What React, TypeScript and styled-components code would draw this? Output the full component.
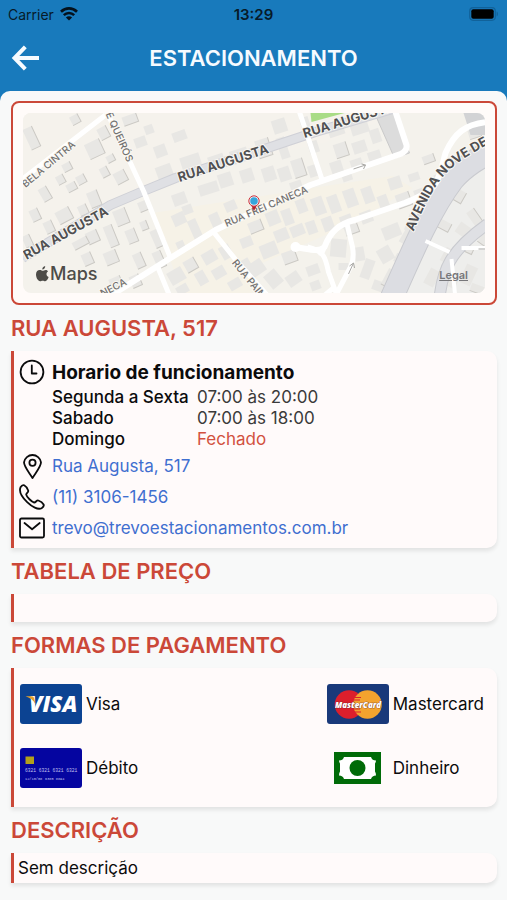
import React from "react";
import styled, { createGlobalStyle } from "styled-components";

const RED = "#cb4838";

const GlobalStyle = createGlobalStyle`
  *, *::before, *::after { box-sizing: border-box; }
  body {
    margin: 0;
    background: #f8f9f9;
    color: #0b0b0c;
    font-family: Inter, "Liberation Sans", sans-serif;
    font-size: 17px;
  }
`;

const Page = styled.div`
  display: flex;
  flex-direction: column;
  min-height: 100vh;
  background: #187abc;
`;

const StatusBar = styled.div`
  display: grid;
  grid-template-columns: 1fr auto 1fr;
  align-items: center;
  height: 28px;
  padding: 0 8px;
  font-size: 14px;
  color: #071a29;
`;

const Carrier = styled.div`
  display: flex;
  align-items: center;
  gap: 6px;
`;

const Clock = styled.time`
  font-size: 15px;
  font-weight: 600;
`;

const Battery = styled.div`
  display: flex;
  justify-content: flex-end;
`;

const NavBar = styled.header`
  display: grid;
  grid-template-columns: 40px 1fr 40px;
  align-items: center;
  height: 63px;
  padding: 0 10px 4px;
  color: #f6fbff;
`;

const BackButton = styled.button`
  display: flex;
  width: 40px;
  padding: 0;
  border: 0;
  background: none;
  color: inherit;
  cursor: pointer;
`;

const NavTitle = styled.h1`
  margin: 0;
  font-size: 22px;
  font-weight: 600;
  line-height: 28px;
  text-align: center;
`;

const Sheet = styled.main`
  flex: 1;
  padding: 10px 10px 16px 11px;
  border-radius: 10px 10px 0 0;
  background: #f8f9f9;
`;

const MapFrame = styled.div`
  position: relative;
  height: 204px;
  padding: 10px;
  border: 2px solid ${RED};
  border-radius: 8px;
  background: #fffbf9;
`;

const MapDrawing = styled.svg`
  display: block;
  width: 100%;
  height: 100%;
  border-radius: 8px;
`;

const MapBrand = styled.div`
  position: absolute;
  left: 23px;
  bottom: 17px;
  display: flex;
  align-items: center;
  gap: 1px;
  font-size: 18px;
  font-weight: 500;
  line-height: 24px;
  color: #4d4c48;
`;

const LegalLink = styled.a`
  position: absolute;
  right: 27px;
  bottom: 20px;
  font-size: 11px;
  font-weight: 600;
  line-height: 16px;
  color: #77777a;
`;

const SectionTitle = styled.h2`
  margin: 0;
  font-size: 22px;
  font-weight: 600;
  line-height: 46px;
  color: ${RED};
`;

const Card = styled.section<{ $padding?: string }>`
  min-height: 28px;
  padding: ${(p) => p.$padding ?? "0"};
  border-left: 3px solid ${RED};
  border-radius: 0 10px 10px 0;
  background: #fffafa;
  box-shadow: 0 3px 4px rgba(0, 0, 0, 0.09);
`;

const InfoRow = styled.div<{ $height: number }>`
  display: grid;
  grid-template-columns: 26px 1fr;
  column-gap: 7px;
  align-items: center;
  height: ${(p) => p.$height}px;
`;

const InfoTitle = styled.h3`
  margin: 0;
  font-size: 19px;
  font-weight: 700;
`;

const Hours = styled.table`
  margin-left: 33px;
  border-collapse: collapse;
  line-height: 21px;
`;

const Day = styled.th`
  width: 145px;
  padding: 0;
  font-weight: 500;
  text-align: left;
  white-space: nowrap;
`;

const Time = styled.td<{ $closed?: boolean }>`
  padding: 0;
  color: ${(p) => (p.$closed ? "#d2513f" : "#3b3a3a")};
  white-space: nowrap;
`;

const ContactLink = styled.a`
  color: #3f6fd0;
  text-decoration: none;
`;

const Payments = styled.ul`
  display: grid;
  grid-template-columns: auto auto;
  grid-auto-rows: 64px;
  justify-content: space-between;
  margin: 0;
  padding: 0;
  list-style: none;
`;

const Payment = styled.li`
  display: grid;
  grid-template-columns: 62px auto;
  column-gap: 4px;
  align-items: center;
  justify-items: center;
  justify-content: start;
`;

const PaymentLabel = styled.span`
  justify-self: start;
`;

const Description = styled.p`
  margin: 0;
  line-height: 30px;
`;

/* ---------- icons ---------- */

const WifiIcon = () => (
  <svg width="18" height="14" viewBox="0 0 18 14" fill="none" stroke="#04111c" aria-hidden="true">
    <path d="M1 4.700C5.600.3 12.400.3 17 4.700" strokeWidth="2.700" />
    <path d="M3.800 8.200c3-2.900 7.400-2.900 10.400 0" strokeWidth="2.500" />
    <path d="M9 13.600 5.900 10.500c1.800-1.700 4.400-1.700 6.200 0z" fill="#04111c" stroke="none" />
  </svg>
);

const BatteryIcon = () => (
  <svg width="30" height="14" viewBox="0 0 30 14" aria-hidden="true">
    <rect x=".7" y=".7" width="25.600" height="12.600" rx="3.500" fill="none" stroke="#11629a" strokeWidth="1.200" />
    <rect x="2.300" y="2.200" width="22.400" height="9.600" rx="2" fill="#000" />
    <path d="M27.600 4.600c1.800.5 1.800 4.300 0 4.800z" fill="#11629a" />
  </svg>
);

const BackIcon = () => (
  <svg width="30" height="26" viewBox="0 0 30 26" fill="none" stroke="currentColor" strokeWidth="4" aria-hidden="true">
    <path d="M15.300 1.800 4.500 13l10.800 11.200M4 13h25" />
  </svg>
);

const lineIcon = {
  fill: "none",
  stroke: "#0b0b0c",
  strokeWidth: 1.8,
  strokeLinecap: "round" as const,
  strokeLinejoin: "round" as const,
  "aria-hidden": true,
};

const ClockIcon = () => (
  <svg width="26" height="26" viewBox="0 0 26 26" {...lineIcon}>
    <circle cx="13" cy="13" r="11.400" />
    <path d="M12.800 6.500v8h4.700" />
  </svg>
);

const PinIcon = () => (
  <svg width="26" height="26" viewBox="0 0 26 26" {...lineIcon}>
    <path d="M13.500 25C11 20.500 5 14 5 9.300a8.600 8.600 0 0 1 17 0C22 14 16 20.500 13.500 25z" />
    <circle cx="13.500" cy="9.700" r="3.100" />
  </svg>
);

const PhoneIcon = () => (
  <svg width="26" height="26" viewBox="0 0 26 26" {...lineIcon}>
    <path d="M1.500 3.300C2.400 1.800 4 .7 5.200 1.300c1.500.8 3.400 3.700 4 5.200.6 1.800-2.300 2.600-2 4.200.4 2.100 5.700 7.400 7.900 7.800 1.600.3 2.400-2.500 4.200-2 1.500.5 4.500 2.500 5.300 4 .6 1.300-.6 2.800-2 3.700C15.500 28-1.800 11.300 1.500 3.300z" />
  </svg>
);

const MailIcon = () => (
  <svg width="26" height="26" viewBox="0 0 26 26" {...lineIcon}>
    <rect x="1" y="3.500" width="24" height="19" rx="1.500" />
    <path d="m5.500 8 7.600 6.200L20.700 8" />
  </svg>
);

const AppleIcon = () => (
  <svg width="13" height="16" viewBox="0 0 14 17" fill="#4d4c48" aria-hidden="true">
    <path d="M9.900 0c.2 1.900-1.300 3.700-3.100 3.700C6.500 2 8.100.2 9.900 0z" />
    <path d="M12.900 5.800c-2.400 1.500-2 4.900.7 5.900-.7 2-2 4.600-3.700 4.600-1 0-1.500-.6-2.700-.6s-1.700.6-2.700.6C2 16.300 0 12.200 0 9.100 0 5.900 2 4.300 4 4.300c1.300 0 2.200.8 3.100.8.900 0 2-.9 3.500-.9.900 0 1.900.6 2.300 1.600z" />
  </svg>
);

const VisaIcon = () => (
  <svg width="62" height="40" viewBox="0 0 62 40" aria-hidden="true">
    <rect width="62" height="40" rx="3" fill="#0c4392" />
    <text x="9" y="28" fontFamily="Open Sans, sans-serif" fontSize="22" fontWeight="800" fontStyle="italic" fill="#fff">VISA</text>
    <path d="M5.500 12.300h6.200c1.500 0 2 .7 2.400 2l1.500 6.200c-1.700-4-5-6.600-10.100-8.200z" fill="#e7a32d" />
  </svg>
);

const MastercardIcon = () => (
  <svg width="62" height="40" viewBox="0 0 62 40" aria-hidden="true">
    <rect width="62" height="40" rx="3" fill="#19397a" />
    <circle cx="22" cy="20.500" r="14.300" fill="#dc1f2c" />
    <circle cx="40.500" cy="20.500" r="14.300" fill="#f3a32e" />
    <path d="M28 13.500h6M27 16h6M27 25h6M28 28h6" stroke="#dc1f2c" strokeWidth="1.200" />
    <text x="31" y="24" textAnchor="middle" fontFamily="Open Sans, sans-serif" fontSize="8" fontWeight="800" fontStyle="italic" fill="#fff" stroke="#5a2531" strokeWidth=".6" paintOrder="stroke">MasterCard</text>
  </svg>
);

const DebitIcon = () => (
  <svg width="62" height="40" viewBox="0 0 62 40" fill="#c3c3f0" fontFamily="Liberation Mono, monospace" aria-hidden="true">
    <rect width="62" height="40" rx="3" fill="#0505a0" />
    <rect x="5.500" y="8.500" width="8.500" height="7.500" fill="#b3a01c" />
    <text x="5" y="24" fontSize="4.600">6321 6321 6321 6321</text>
    <text x="5" y="31.500" fontSize="3.600">12/10/08</text>
    <text x="25" y="31.500" fontSize="3.600">6385 8894</text>
  </svg>
);

const CashIcon = () => (
  <svg width="47" height="32" viewBox="0 0 47 32" aria-hidden="true">
    <rect width="47" height="32" fill="#006b08" />
    <path d="M10 5h27q1 3.500 5 3.500 0 1.500-1 3v8q1 1.500 1 4-4 0-5 3.500H10q-1-3.500-5-3.500 0-2.500 1-4v-8q-1-1.500-1-3 4 0 5-3.500z" fill="#fff" />
    <circle cx="23.500" cy="16" r="8" fill="#006b08" />
  </svg>
);

/* ---------- map ---------- */

/* x, y, width, height, rotation of each building block */
const buildings: number[][] = [
  [4, 14, 10, 22, -25], [48, 2, 9, 9, -28], [64, 28, 16, 16, -25], [76, 14, 10, 12, -28], [84, 42, 8, 7, -28],
  [78, 54, 8, 10, -28], [92, 58, 12, 12, -28], [18, 74, 9, 14, -30], [34, 62, 8, 9, -28], [44, 70, 10, 8, -28],
  [54, 62, 9, 9, -28], [40, 50, 9, 8, -28], [66, 78, 11, 16, -22], [34, 96, 15, 13, -28], [8, 96, 9, 12, -25],
  [56, 92, 9, 10, -25], [1, 122, 8, 12, -25], [22, 108, 9, 12, -25], [100, 2, 15, 9, -20], [112, 24, 12, 10, -20],
  [132, 32, 12, 12, -20], [150, 18, 14, 10, -20], [122, 12, 9, 9, -20], [134, 52, 16, 14, -20], [158, 42, 20, 12, -18],
  [186, 42, 16, 12, -18], [208, 36, 18, 14, -18], [234, 26, 14, 18, -18], [196, 60, 14, 14, -18], [176, 70, 20, 11, -18],
  [218, 56, 13, 13, -18], [240, 54, 13, 14, -18], [150, 80, 14, 12, -20], [160, 92, 10, 9, -20],
  [92, 96, 13, 16, -22], [116, 88, 10, 10, -22], [104, 116, 10, 14, -22], [84, 112, 9, 22, -22], [118, 108, 7, 9, -22],
  [130, 116, 11, 18, -24], [82, 138, 13, 13, -22], [112, 140, 9, 15, -24], [132, 138, 9, 17, -24], [64, 118, 12, 12, -24],
  [88, 164, 12, 14, -24], [60, 140, 10, 12, -24], [108, 162, 10, 12, -24], [50, 126, 16, 8, -28],
  [150, 100, 13, 12, -24], [168, 106, 9, 20, -24], [188, 100, 10, 15, -24], [202, 88, 12, 10, -24], [154, 128, 8, 8, -24],
  [146, 156, 16, 14, -30], [162, 146, 12, 12, -30], [180, 138, 14, 12, -30], [198, 132, 11, 14, -30], [174, 158, 10, 14, -30],
  [190, 154, 13, 11, -30], [206, 166, 13, 10, -30], [154, 172, 12, 9, -30], [218, 146, 10, 10, -30],
  [256, 24, 9, 22, -18], [270, 46, 12, 18, -18], [286, 28, 10, 12, -18], [256, 54, 12, 14, -18], [286, 52, 9, 12, -18],
  [268, 68, 12, 12, -18], [250, 6, 14, 14, -18], [278, 4, 9, 12, -18], [306, 14, 16, 9, -18], [328, 8, 18, 13, -18],
  [312, 30, 13, 14, -18], [330, 28, 14, 12, -18], [348, 16, 10, 14, -18], [308, 48, 12, 12, -18], [328, 46, 12, 9, -18],
  [346, 38, 13, 13, -18], [320, 62, 10, 6, -18], [366, 64, 13, 12, -18], [386, 60, 11, 8, -18],
  [226, 108, 14, 11, -22], [244, 98, 13, 14, -22], [260, 96, 10, 16, -20], [274, 86, 10, 14, -20], [290, 84, 12, 18, -20],
  [306, 82, 11, 18, -20], [322, 76, 12, 18, -20], [340, 74, 11, 16, -20], [356, 82, 10, 14, -20], [374, 80, 14, 14, -20],
  [392, 76, 10, 10, -20], [252, 116, 14, 12, -22], [268, 112, 14, 11, -22], [284, 108, 10, 13, -20], [300, 104, 11, 14, -20],
  [318, 102, 12, 12, -20], [338, 98, 12, 12, -20], [238, 130, 17, 14, -22], [260, 138, 14, 12, -20], [226, 148, 16, 14, -35],
  [244, 158, 14, 16, -40], [264, 160, 14, 12, -35], [284, 152, 13, 10, -20], [288, 168, 10, 9, -20], [218, 124, 12, 10, -22],
  [308, 126, 16, 18, 5], [316, 150, 10, 7, 0], [322, 112, 14, 9, -20], [332, 134, 10, 14, -10], [340, 146, 10, 20, 20],
  [360, 112, 18, 13, -22], [376, 118, 18, 10, -60], [356, 134, 14, 15, -30], [350, 168, 12, 10, 20], [384, 102, 12, 17, 20],
  [372, 142, 12, 9, 28], [362, 156, 9, 18, 28], [404, 156, 11, 17, 28], [420, 136, 13, 15, 28], [418, 162, 17, 11, 28],
  [440, 152, 12, 20, 25], [434, 112, 16, 12, 35], [448, 96, 9, 18, -35], [416, 108, 12, 9, 28], [428, 76, 14, 12, 30],
  [406, 96, 11, 12, 30], [412, 60, 13, 9, -20], [400, 42, 12, 8, -20], [426, 50, 12, 12, -40], [444, 38, 13, 15, -30],
  [446, 16, 12, 9, -18], [458, 118, 12, 15, 35], [448, 172, 14, 8, 20], [442, 132, 9, 8, 25],
];

const outlined = (i: number) => i < 18 || (i > 33 && i < 48) || i > 122 || i % 9 === 0;

const MapView = () => (
  <MapDrawing viewBox="0 0 463 180" preserveAspectRatio="xMidYMid slice" role="img" aria-label="Mapa da Rua Augusta">
    <defs>
      <path id="nove-de-julho" d="M391 119C407 80 417 63 438 48 453 38 466 31 480 24" />
    </defs>
    <rect width="463" height="180" fill="#f4f2ec" />
    <path d="M0 0h380l-80 30-150 36-60 24L0 145z" fill="#f5f2ec" />
    <path d="M130 100 290 75l80-12 20 12-60 35-90 40-10 30H160z" fill="#f6f2e7" />
    <path d="M370 180c12-50 40-100 93-130v130z" fill="#eeeeec" />
    <g fill="#e8e7e4">
      {buildings.map(([x, y, w, h, r], i) => (
        <rect key={i} x={x} y={y} width={w} height={h} transform={`rotate(${r} ${x + w / 2} ${y + h / 2})`} />
      ))}
    </g>
    <g fill="none" stroke="#cbc9c4" strokeWidth="1">
      {buildings.map(([x, y, w, h, r], i) =>
        outlined(i) ? (
          <path key={i} d={`M${x} ${y + h}h${w}v${-h}`} transform={`rotate(${r} ${x + w / 2} ${y + h / 2})`} />
        ) : null
      )}
    </g>
    <path d="M288 0h34l-33 9z" fill="#a9dc86" />
    <path d="M352 0h20l15 40-15 5z" fill="#dcdcdc" stroke="#c9c9c9" />
    <path d="M441 0h22v22h-15z" fill="#d2d3d5" />
    <g fill="none" strokeLinejoin="round">
      <path d="M0 145 88 92l33-14 32-13 95-31 45-15 80-24" stroke="#cfd0d6" strokeWidth="10" />
      <path d="M0 145 88 92l33-14 32-13 95-31 45-15 80-24" stroke="#dfe0e4" strokeWidth="8" />
      <path d="M367 190C390 138 408 96 430 67c12-14 26-22 45-32" stroke="#c9cacf" strokeWidth="24" />
      <path d="M367 190C390 138 408 96 430 67c12-14 26-22 45-32" stroke="#dcdde2" strokeWidth="22" />
      <path d="M417 185c3-28 10-47 48-74" stroke="#c9cacf" strokeWidth="12" />
      <path d="M417 185c3-28 10-47 48-74" stroke="#dfe0e4" strokeWidth="10" />
    </g>
    <g fill="none" stroke="#fff" strokeWidth="6" strokeLinejoin="round">
      <path d="M-5 70 83 2M82-6l39 84 27 67" strokeWidth="5" />
      <path d="M86 184 148 145l45-28 40-19 55-26 52-18 38-13q7-3 6-9L372-4" />
      <path d="M134 151l14 34M191 119l24 30 34 38M276-4l24 72" strokeWidth="5" />
      <path d="M273 134c18 3 24 5 29 0 6-16 15-23 30-27l50-17c32-12 33-18 41-50 9-20 20-29 42-31" />
      <path d="M285 134c17 4 18 11 21 25l8 22 14-27q4-8 2-20l-6-25M302 134l-4 9M300 184l11-9 6 9" strokeWidth="5" />
      <path d="m403 128 24 11M463 135h-24M429 146l4 40" strokeWidth="4" />
    </g>
    <circle cx="273" cy="134" r="5" fill="#fff" />
    <path d="m331 56 12-4m-4-1 4 1-2 4M326 161l5-11m-4 3 4-3 1 5M456 136h7" fill="none" stroke="#a9a8a5" />
    <g fontFamily="Inter, sans-serif" fill="#505052" stroke="#faf8f3" strokeWidth="2" paintOrder="stroke" strokeLinejoin="round">
      <g fontSize="13" fontWeight="700">
        <text transform="translate(4 147) rotate(-29)">RUA AUGUSTA</text>
        <text transform="translate(157 69) rotate(-18)">RUA AUGUSTA</text>
        <text transform="translate(282 25) rotate(-17)">RUA AUGUSTA</text>
        <text><textPath href="#nove-de-julho">AVENIDA NOVE DE</textPath></text>
      </g>
      <g fontSize="10" fontWeight="500" fill="#727170">
        <text transform="translate(3 75) rotate(-40)">BELA CINTRA</text>
        <text transform="translate(83 1) rotate(66)">E QUEIRÓS</text>
        <text transform="translate(204 114) rotate(-23)">RUA FREI CANECA</text>
        <text transform="translate(209 150) rotate(51)">RUA PAIM</text>
        <text transform="translate(80 184) rotate(-27)">NECA</text>
      </g>
    </g>
    <path d="m231.500 98-4.500-9h9z" fill="#b71f2a" />
    <circle cx="231.500" cy="88" r="4.500" fill="#35a5dc" stroke="#e9edf1" strokeWidth="1.500" />
    <circle cx="231.500" cy="88" r="5.200" fill="none" stroke="#cf3540" />
  </MapDrawing>
);

/* ---------- content ---------- */

const hours = [
  { day: "Segunda a Sexta", time: "07:00 às 20:00" },
  { day: "Sabado", time: "07:00 às 18:00" },
  { day: "Domingo", time: "Fechado", closed: true },
];

const contacts = [
  { icon: <PinIcon />, label: "Rua Augusta, 517", href: "#mapa" },
  { icon: <PhoneIcon />, label: "(11) 3106-1456", href: "tel:+551131061456" },
  { icon: <MailIcon />, label: "trevo@trevoestacionamentos.com.br", href: "mailto:trevo@trevoestacionamentos.com.br" },
];

const payments = [
  { icon: <VisaIcon />, label: "Visa" },
  { icon: <MastercardIcon />, label: "Mastercard" },
  { icon: <DebitIcon />, label: "Débito" },
  { icon: <CashIcon />, label: "Dinheiro" },
];

export default function App() {
  return (
    <>
      <GlobalStyle />
      <Page>
        <StatusBar>
          <Carrier>Carrier <WifiIcon /></Carrier>
          <Clock>13:29</Clock>
          <Battery><BatteryIcon /></Battery>
        </StatusBar>
        <NavBar>
          <BackButton type="button" aria-label="Voltar"><BackIcon /></BackButton>
          <NavTitle>ESTACIONAMENTO</NavTitle>
        </NavBar>
        <Sheet>
          <MapFrame id="mapa">
            <MapView />
            <MapBrand><AppleIcon />Maps</MapBrand>
            <LegalLink href="#legal">Legal</LegalLink>
          </MapFrame>

          <SectionTitle>RUA AUGUSTA, 517</SectionTitle>
          <Card $padding="6px 10px 5px 5px">
            <InfoRow $height={30}>
              <ClockIcon />
              <InfoTitle>Horario de funcionamento</InfoTitle>
            </InfoRow>
            <Hours>
              <tbody>
                {hours.map((h) => (
                  <tr key={h.day}>
                    <Day scope="row">{h.day}</Day>
                    <Time $closed={h.closed}>{h.time}</Time>
                  </tr>
                ))}
              </tbody>
            </Hours>
            {contacts.map((c) => (
              <InfoRow key={c.label} $height={31}>
                {c.icon}
                <ContactLink href={c.href}>{c.label}</ContactLink>
              </InfoRow>
            ))}
          </Card>

          <SectionTitle>TABELA DE PREÇO</SectionTitle>
          <Card />

          <SectionTitle>FORMAS DE PAGAMENTO</SectionTitle>
          <Card $padding="4px 13px 7px 6px">
            <Payments>
              {payments.map((p) => (
                <Payment key={p.label}>
                  {p.icon}
                  <PaymentLabel>{p.label}</PaymentLabel>
                </Payment>
              ))}
            </Payments>
          </Card>

          <SectionTitle>DESCRIÇÃO</SectionTitle>
          <Card $padding="0 4px">
            <Description>Sem descrição</Description>
          </Card>
        </Sheet>
      </Page>
    </>
  );
}
